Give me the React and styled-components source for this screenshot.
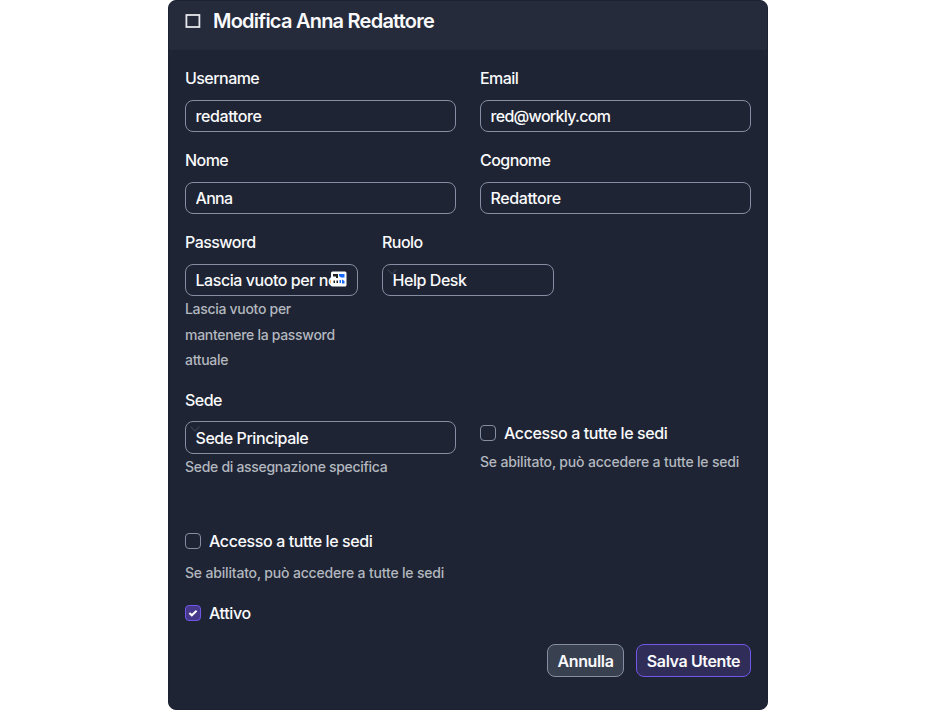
import React from "react";
import styled, { createGlobalStyle, css } from "styled-components";

const GlobalStyle = createGlobalStyle`
  * { box-sizing: border-box; }
  body {
    margin: 0;
    background: #fff;
    color: #fafafc;
    font: 500 16px/26px Inter, "Liberation Sans", sans-serif;
    letter-spacing: -0.38px;
    -webkit-font-smoothing: antialiased;
  }
`;

const Modal = styled.form`
  width: 600px;
  height: 710px;
  margin: 0 auto;
  background: #1e2433;
  border: 1px solid #1c2232;
  border-radius: 8px;
  overflow: hidden;
`;

const Header = styled.header`
  display: flex;
  align-items: center;
  gap: 12px;
  height: 49px;
  padding: 0 16px 8px;
  background: #252b3b;
  border-bottom: 1px solid #232939;
`;

const HeaderIcon = styled.svg`
  display: block;
  width: 16px;
  height: 16px;
`;

const Title = styled.h1`
  margin: 0;
  font-size: 20px;
  font-weight: 600;
  line-height: 26px;
  letter-spacing: -0.77px;
`;

const Body = styled.div`
  display: flex;
  flex-direction: column;
  padding: 15px 16px 0;
`;

const Row = styled.div`
  display: grid;
  grid-template-columns: ${(p) => p.$columns || "271px 271px"};
  column-gap: 24px;
  height: ${(p) => p.$height || 82}px;
  align-items: start;
`;

const Field = styled.div`
  display: flex;
  flex-direction: column;
`;

const Label = styled.label`
  height: ${(p) => p.$height || 35}px;
  line-height: 27px;
  letter-spacing: -0.55px;
`;

const control = css`
  height: ${(p) => p.$height || 32}px;
  border: 1px solid #858ea3;
  border-radius: 8px;
  background: #1e2433;
`;

const Input = styled.input`
  ${control}
  width: 100%;
  padding: 0 ${(p) => p.$endSpace || 9.5}px 1px 9.5px;
  color: inherit;
  font: inherit;
  letter-spacing: ${(p) => p.$tracking || -0.38}px;
  outline: none;
  &::placeholder { color: #fafafc; opacity: 1; }
`;

const InputWrap = styled.div`
  position: relative;
  display: flex;
`;

const ManagerBadge = styled.svg`
  position: absolute;
  right: 11px;
  top: 7px;
  width: 16px;
  height: 16px;
`;

const Select = styled.div`
  ${control}
  position: relative;
  padding: 0 9.5px;
  line-height: ${(p) => (p.$height ? 32 : 30)}px;
  letter-spacing: -0.44px;
`;

const Caret = styled.svg`
  position: absolute;
  left: 3px;
  top: 3px;
  width: 12px;
  height: 8px;
`;

const SelectText = styled.span`
  position: relative;
`;

const Help = styled.small`
  display: block;
  margin-top: ${(p) => p.$top || 0}px;
  color: #b3b7bf;
  font-size: 14px;
  font-weight: 500;
  line-height: 25.5px;
  letter-spacing: ${(p) => p.$tracking || -0.3}px;
`;

const Check = styled.label`
  display: flex;
  align-items: center;
  gap: 8px;
  height: 26px;
`;

const CheckBox = styled.span`
  display: flex;
  width: 16px;
  height: 16px;
  border: 1px solid ${(p) => (p.$checked ? "#7256e8" : "#858ea3")};
  border-radius: 4px;
  background: ${(p) => (p.$checked ? "#46398b" : "transparent")};
`;

const CheckField = styled.div`
  padding-top: ${(p) => p.$top || 0}px;
`;

const Actions = styled.footer`
  display: flex;
  justify-content: flex-end;
  gap: 12px;
  margin-top: 18px;
`;

const Button = styled.button`
  width: ${(p) => p.$width}px;
  height: 33px;
  padding: 1px 0 0;
  border: 1px solid ${(p) => (p.$primary ? "#7256e8" : "#858ea3")};
  border-radius: 8px;
  background: ${(p) => (p.$primary ? "#302d59" : "#394050")};
  color: inherit;
  font: inherit;
  font-weight: 600;
  letter-spacing: -0.38px;
  white-space: nowrap;
`;

function TextField({ label, value, tracking }) {
  return (
    <Field>
      <Label>{label}</Label>
      <Input defaultValue={value} $tracking={tracking} />
    </Field>
  );
}

function SelectField({ label, value, height, labelHeight, help }) {
  return (
    <Field>
      <Label $height={labelHeight}>{label}</Label>
      <Select $height={height}>
        <Caret viewBox="0 0 12 8" fill="none" stroke="#343b4c" strokeWidth="1.3">
          <path d="M1.5 1.5 6 6l4.5-4.5" />
        </Caret>
        <SelectText>{value}</SelectText>
      </Select>
      {help && <Help>{help}</Help>}
    </Field>
  );
}

function CheckOption({ label, checked, help, top, helpTop }) {
  return (
    <CheckField $top={top}>
      <Check>
        <CheckBox $checked={checked}>
          {checked && (
            <svg width="14" height="14" viewBox="0 0 14 14" fill="none" stroke="#fff" strokeWidth="2">
              <path d="m3.4 7 2.4 2.3 4.8-4.6" />
            </svg>
          )}
        </CheckBox>
        {label}
      </Check>
      {help && <Help $top={helpTop} $tracking={-0.18}>{help}</Help>}
    </CheckField>
  );
}

const ACCESS = "Accesso a tutte le sedi";
const ACCESS_HELP = "Se abilitato, può accedere a tutte le sedi";

export default function App() {
  return (
    <>
      <GlobalStyle />
      <Modal>
        <Header>
          <HeaderIcon viewBox="0 0 16 16" fill="none" stroke="#e6e7ec" strokeWidth="1.8">
            <rect x="1.4" y="2" width="13" height="12" />
          </HeaderIcon>
          <Title>Modifica Anna Redattore</Title>
        </Header>
        <Body>
          <Row>
            <TextField label="Username" value="redattore" />
            <TextField label="Email" value="red@workly.com" tracking={-0.7} />
          </Row>
          <Row>
            <TextField label="Nome" value="Anna" tracking={-0.7} />
            <TextField label="Cognome" value="Redattore" />
          </Row>
          <Row $columns="173px 172px" $height={158}>
            <Field>
              <Label>Password</Label>
              <InputWrap>
                <Input placeholder="Lascia vuoto per non modificare" $endSpace={18} $tracking={-0.44} />
                <ManagerBadge viewBox="0 0 16 16">
                  <rect y="0.5" width="15.5" height="15" rx="1.5" fill="#fff" />
                  <path d="M2 3h5v4H5V5.5H2zM2.5 9.5h1.5V12H2.5zM5.5 9.5H7V12H5.5z" fill="#222" />
                  <path d="M8 3h5.5v3.5H10L8 5zM8.5 9h1.5v3H8.5zM11 8.5l2.5 1.5v2.5H11z" fill="#1769ff" />
                </ManagerBadge>
              </InputWrap>
              <Help>Lascia vuoto per mantenere la password attuale</Help>
            </Field>
            <SelectField label="Ruolo" value="Help Desk" />
          </Row>
          <Row $height={141}>
            <SelectField label="Sede" value="Sede Principale" labelHeight={34} height={33} help="Sede di assegnazione specifica" />
            <CheckOption top={33} helpTop={3} label={ACCESS} help={ACCESS_HELP} />
          </Row>
          <CheckOption helpTop={6} label={ACCESS} help={ACCESS_HELP} />
          <CheckOption top={14} label="Attivo" checked />
          <Actions>
            <Button type="button" $width={77}>Annulla</Button>
            <Button type="button" $primary $width={115}>Salva Utente</Button>
          </Actions>
        </Body>
      </Modal>
    </>
  );
}
